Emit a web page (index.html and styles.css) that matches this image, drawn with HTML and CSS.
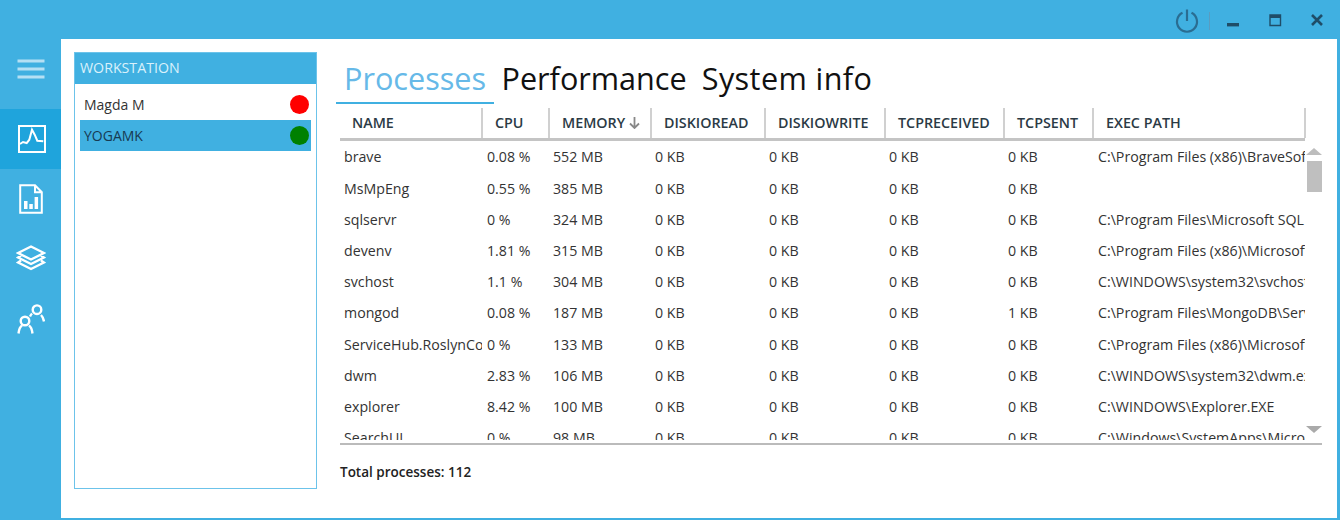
FILE: index.html
```html
<!DOCTYPE html>
<html lang="en">
<head>
  <meta charset="UTF-8">
  <meta name="viewport" content="width=device-width, initial-scale=1.0">
  <title>Processes</title>
  <link rel="stylesheet" href="styles.css">
</head>
<body>

  <div class="titlebar">
    <svg class="power" width="24" height="24" viewBox="0 0 24 24"><path d="M7.500 3.800a10 10 0 1 0 9 0M12 .5v11.500"/></svg>
    <span class="sep"></span>
    <svg class="win-btn" width="14" height="14" viewBox="0 0 14 14"><rect x="1" y="9" width="12" height="3.400"/></svg>
    <svg class="win-btn" width="14" height="14" viewBox="0 0 14 14"><path d="M2 2h10.500v10.500H2z" fill="none" stroke-width="1.400"/><rect x="2" y="2" width="10.500" height="3"/></svg>
    <svg class="win-btn close" width="14" height="14" viewBox="0 0 14 14"><path d="M2 2l10 10M12 2L2 12" fill="none" stroke-width="2.600"/></svg>
  </div>

  <div class="main">
    <nav class="sidebar">
      <div class="nav-item menu">
        <svg width="30" height="22" viewBox="0 0 30 22"><path d="M1.500 3h27M1.500 11h27M1.500 19h27"/></svg>
      </div>
      <div class="nav-item current">
        <svg width="30" height="30" viewBox="0 0 30 30"><path d="M3 2h26v26H3z"/><path d="M4 20l3-2 3.700 1 2.600-3.300L16 5.700l2.700 5 2.600 6 6 .6"/></svg>
      </div>
      <div class="nav-item">
        <svg width="24" height="30" viewBox="0 0 24 30"><path d="M1.200 1.200h14.800l6.800 7v20.600H1.200zM16 1.200v7h6.800"/><path class="fill" d="M5 17h3.500v8H5zM10.300 20h3.500v5h-3.500zM15.600 13h3.500v12h-3.500z"/></svg>
      </div>
      <div class="nav-item">
        <svg class="thick" width="30" height="28" viewBox="0 0 30 28"><path d="M15 1.500L28 8l-13 6.500L2 8zM5 10.500L2 12.500l13 6.500 13-6.500-3-2M5 15.500L2 17.500l13 6.500 13-6.500-3-2"/></svg>
      </div>
      <div class="nav-item">
        <svg class="thick" width="28" height="30" viewBox="0 0 28 30"><circle cx="20" cy="5.700" r="4.300"/><circle cx="8" cy="17" r="4.300"/><path d="M1.500 29.500C2 25 3.500 22.500 5 21.500M15.500 29.500C15 25 13.500 22.500 12 21.500M15 9.500c-.8.8-1.500 2-2 3M27 17.500c-.5-3-1.500-5-3-6.500"/></svg>
      </div>
    </nav>

    <div class="content">
      <section class="workstations">
        <h2 class="ws-title">WORKSTATION</h2>
        <ul class="ws-list">
          <li class="ws-item">Magda M <span class="dot red"></span></li>
          <li class="ws-item selected">YOGAMK <span class="dot green"></span></li>
        </ul>
      </section>

      <section class="panel">
        <div class="tabs">
          <span class="tab tab-on">Processes</span>
          <span class="tab">Performance</span>
          <span class="tab">System info</span>
        </div>

        <div class="grid">
          <div class="row head">
            <div>NAME</div>
            <div>CPU</div>
            <div>MEMORY <svg class="sort" width="11" height="12" viewBox="0 0 11 12"><path d="M5.500 0v10.500M1 6.500l4.500 4.500L10 6.500"/></svg></div>
            <div>DISKIOREAD</div>
            <div>DISKIOWRITE</div>
            <div>TCPRECEIVED</div>
            <div>TCPSENT</div>
            <div>EXEC PATH</div>
          </div>
          <div class="grid-body">
            <div class="rows">
              <div class="row"><div>brave</div><div>0.08 %</div><div>552 MB</div><div>0 KB</div><div>0 KB</div><div>0 KB</div><div>0 KB</div><div>C:\Program Files (x86)\BraveSoftware\Brave</div></div>
              <div class="row"><div>MsMpEng</div><div>0.55 %</div><div>385 MB</div><div>0 KB</div><div>0 KB</div><div>0 KB</div><div>0 KB</div><div></div></div>
              <div class="row"><div>sqlservr</div><div>0 %</div><div>324 MB</div><div>0 KB</div><div>0 KB</div><div>0 KB</div><div>0 KB</div><div>C:\Program Files\Microsoft SQL Server</div></div>
              <div class="row"><div>devenv</div><div>1.81 %</div><div>315 MB</div><div>0 KB</div><div>0 KB</div><div>0 KB</div><div>0 KB</div><div>C:\Program Files (x86)\Microsoft Visual</div></div>
              <div class="row"><div>svchost</div><div>1.1 %</div><div>304 MB</div><div>0 KB</div><div>0 KB</div><div>0 KB</div><div>0 KB</div><div>C:\WINDOWS\system32\svchost.exe</div></div>
              <div class="row"><div>mongod</div><div>0.08 %</div><div>187 MB</div><div>0 KB</div><div>0 KB</div><div>0 KB</div><div>1 KB</div><div>C:\Program Files\MongoDB\Server\bin</div></div>
              <div class="row"><div>ServiceHub.RoslynCodeAnalysis</div><div>0 %</div><div>133 MB</div><div>0 KB</div><div>0 KB</div><div>0 KB</div><div>0 KB</div><div>C:\Program Files (x86)\Microsoft Visual</div></div>
              <div class="row"><div>dwm</div><div>2.83 %</div><div>106 MB</div><div>0 KB</div><div>0 KB</div><div>0 KB</div><div>0 KB</div><div>C:\WINDOWS\system32\dwm.exe</div></div>
              <div class="row"><div>explorer</div><div>8.42 %</div><div>100 MB</div><div>0 KB</div><div>0 KB</div><div>0 KB</div><div>0 KB</div><div>C:\WINDOWS\Explorer.EXE</div></div>
              <div class="row"><div>SearchUI</div><div>0 %</div><div>98 MB</div><div>0 KB</div><div>0 KB</div><div>0 KB</div><div>0 KB</div><div>C:\Windows\SystemApps\Microsoft</div></div>
            </div>
            <div class="scrollbar">
              <span class="arrow up"></span>
              <span class="thumb"></span>
              <span class="arrow down"></span>
            </div>
          </div>
        </div>

        <p class="total">Total processes: 112</p>
      </section>
    </div>
  </div>

</body>
</html>
```

FILE: styles.css
```css
html, body {
  margin: 0;
  height: 100%;
}
body {
  width: 1340px;
  height: 520px;
  overflow: hidden;
  background: #40b0e1;
  font-family: "Open Sans", "Noto Sans", sans-serif;
  font-size: 14.2px;
  color: #333;
}

/* title bar */
.titlebar {
  height: 39px;
  display: flex;
  align-items: center;
  padding-right: 16px;
  box-sizing: border-box;
}
.power {
  margin-left: auto;
  margin-top: 3px;
  fill: none;
  stroke: #2a6d92;
  stroke-width: 2.200;
}
.sep {
  width: 1px;
  height: 18px;
  margin: 2px 0 0 10px;
  background: #5a9cc0;
}
.win-btn {
  margin-left: 28px;
  fill: #1f4d68;
  stroke: #1f4d68;
  stroke-width: 0;
}
.sep + .win-btn {
  margin-left: 16px;
  margin-top: 3px;
}

.main {
  display: flex;
  height: 479px;
}

/* sidebar */
.sidebar {
  width: 61px;
  flex-shrink: 0;
}
.nav-item {
  height: 60px;
  display: flex;
  align-items: center;
  justify-content: center;
}
.nav-item svg {
  fill: none;
  stroke: #fff;
  stroke-width: 2;
}
.nav-item svg.thick {
  stroke-width: 2.400;
}
.nav-item svg .fill {
  fill: #fff;
  stroke: none;
}
.menu {
  margin-bottom: 10px;
}
.nav-item.menu svg {
  stroke: #b5e0f4;
  stroke-width: 3;
}
.current {
  background: #1fa4dc;
}

/* content */
.content {
  width: 1276px;
  background: #fff;
  display: flex;
  padding: 13px 0 0 13px;
  box-sizing: border-box;
}

.workstations {
  width: 243px;
  height: 437px;
  box-sizing: border-box;
  border: 1px solid #6cc3ea;
}
.ws-title {
  margin: 0;
  height: 31px;
  padding-left: 5px;
  background: #40b0e1;
  color: #d9f0fb;
  font-size: 14.200px;
  font-weight: 400;
  line-height: 29px;
}
.ws-list {
  list-style: none;
  margin: 5px 0 0;
  padding: 0 5px;
}
.ws-item {
  height: 31px;
  display: flex;
  align-items: center;
  justify-content: space-between;
  padding: 0 2px 0 4px;
  color: #333;
  font-size: 14px;
}
.selected {
  background: #40b0e1;
  color: #173a52;
}
.dot {
  width: 19px;
  height: 19px;
  border-radius: 50%;
}
.red { background: #f00; }
.green { background: #008000; }

/* processes panel */
.panel {
  margin-left: 23px;
  width: 982px;
}
.tabs {
  display: flex;
  height: 52px;
  margin-left: -4px;
}
.tab {
  padding: 0 7.500px;
  font-size: 30.600px;
  line-height: 52px;
  color: #111;
  white-space: nowrap;
}
.tab:last-child {
  letter-spacing: .4px;
}
.tab-on {
  padding: 0 8px;
  color: #66b9e8;
  border-bottom: 2px solid #40b0e1;
  width: 142px;
  height: 50px;
}

.grid {
  margin-top: 4px;
  border-bottom: 2px solid #bbb;
}
.row {
  display: grid;
  grid-template-columns: 142px 67px 102px 114px 120px 119px 89px 212px;
  height: 31.200px;
  align-items: center;
}
.row > div {
  overflow: hidden;
  white-space: nowrap;
  padding-left: 4px;
  padding-right: 1px;
  min-width: 0;
}
.row > div:nth-child(2) {
  padding-left: 5px;
}
.row > div:last-child {
  padding: 0 5px;
}
.row.head {
  height: 33px;
  width: 965px;
  box-sizing: border-box;
  border-bottom: 3px solid #c4c4c4;
  align-items: stretch;
  font-weight: 600;
  font-size: 14.300px;
  color: #2b3a45;
}
.row.head > div {
  padding-left: 12px;
  line-height: 30px;
  border-right: 2px solid #d0d0d0;
  margin-right: -1px;
}
.row.head > div:nth-child(n+2) {
  padding-left: 13px;
}
.sort {
  fill: none;
  stroke: #888;
  stroke-width: 1.800;
  vertical-align: -1px;
}
.grid-body {
  display: flex;
  height: 302px;
  overflow: hidden;
}
.rows {
  width: 965px;
  height: 299px;
  padding-top: .3px;
  box-sizing: border-box;
  flex-shrink: 0;
  overflow: hidden;
}

.scrollbar {
  width: 16px;
  margin-left: 1px;
  display: flex;
  flex-direction: column;
  align-items: center;
  padding-top: 7px;
  box-sizing: border-box;
  height: 100%;
}
.thumb {
  width: 15px;
  height: 31px;
  margin-top: 6px;
  background: #bfbfbf;
}
.arrow {
  width: 0;
  height: 0;
  border-left: 8px solid transparent;
  border-right: 8px solid transparent;
}
.arrow.up {
  border-bottom: 7px solid #bdbdbd;
}
.arrow.down {
  margin-top: auto;
  margin-bottom: 10px;
  border-top: 7px solid #aaa;
}

.total {
  margin: 18px 0 0;
  font-weight: 600;
  font-size: 13.500px;
  color: #222;
}
```
